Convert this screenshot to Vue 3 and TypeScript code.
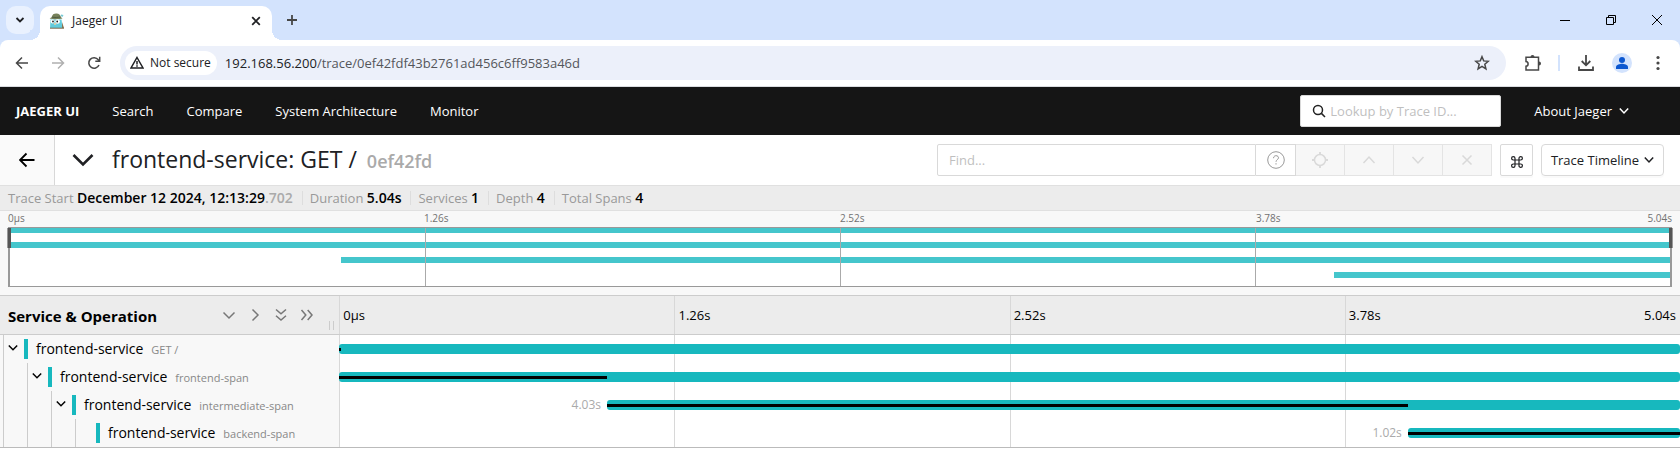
<script setup lang="ts">
import { ref } from 'vue'

interface Span {
  service: string
  operation: string
  depth: number
  start: number
  end: number
  criticalEnd: number
  label: string
}

const spans: Span[] = [
  { service: 'frontend-service', operation: 'GET /', depth: 0, start: 0, end: 100, criticalEnd: 0.1, label: '' },
  { service: 'frontend-service', operation: 'frontend-span', depth: 1, start: 0, end: 100, criticalEnd: 20, label: '' },
  { service: 'frontend-service', operation: 'intermediate-span', depth: 2, start: 19.97, end: 100, criticalEnd: 79.7, label: '4.03s' },
  { service: 'frontend-service', operation: 'backend-span', depth: 3, start: 79.7, end: 100, criticalEnd: 100, label: '1.02s' },
]

const ticks = ['0µs', '1.26s', '2.52s', '3.78s']
const endTick = '5.04s'
const navLinks = ['Search', 'Compare', 'System Architecture', 'Monitor']
const summary = [
  { name: 'Trace Start', value: 'December 12 2024, 12:13:29', faint: '.702' },
  { name: 'Duration', value: '5.04s', faint: '' },
  { name: 'Services', value: '1', faint: '' },
  { name: 'Depth', value: '4', faint: '' },
  { name: 'Total Spans', value: '4', faint: '' },
]

const traceId = ref('')
const find = ref('')
const address = ref('/trace/0ef42fdf43b2761ad456c6ff9583a46d')

const critical = (s: Span) => ((s.criticalEnd - s.start) / (s.end - s.start)) * 100
</script>

<template>
  <div class="window">
    <div class="tabstrip">
      <button class="tab-search" aria-label="Search tabs">
        <svg width="10" height="8" viewBox="0 0 10 8"><path d="M1.500 2L5 5.500 8.500 2" class="s2" /></svg>
      </button>
      <div class="tab">
        <svg class="favicon" width="16" height="16" viewBox="0 0 16 16">
          <path d="M1.500 6.500h11l1 8.500H1z" fill="#62cbdc" />
          <path d="M13 9l2 6h-2z" fill="#8a7350" />
          <path d="M12 1.500l2.500.5-1 2-1.800-1z" fill="#78cbd6" />
          <path d="M3 4C3 1.300 5 .3 7.500.4c2.500 0 4 1.300 4 3.400l2 1.800c-3 .8-9.500 1-12.900-.1z" fill="#76815a" />
          <path d="M2.800 4c3 .7 6 .6 8.700-.2" fill="none" stroke="#4d5940" />
          <circle cx="3.600" cy="8.500" r="2" fill="#fff" />
          <circle cx="8.600" cy="8.500" r="2.300" fill="#fff" />
          <circle cx="4" cy="8.500" r=".9" fill="#222" />
          <circle cx="8.200" cy="8.500" r=".9" fill="#222" />
          <path d="M5 10h2.200v1.800H5z" fill="#dfd0a8" />
          <path d="M1 15.200h14" stroke="#79684a" />
        </svg>
        <span class="tab-title">Jaeger UI</span>
        <button class="tab-close" aria-label="Close tab">
          <svg width="10" height="10" viewBox="0 0 10 10"><path d="M1.200 1.200l7.600 7.600M8.800 1.200L1.200 8.800" class="s2" /></svg>
        </button>
      </div>
      <button class="new-tab" aria-label="New tab">
        <svg width="12" height="12" viewBox="0 0 12 12"><path d="M6 1v10M1 6h10" class="s2" /></svg>
      </button>
      <div class="win-controls">
        <button aria-label="Minimize"><svg width="10" height="10" viewBox="0 0 10 10"><path d="M0 5.500h10" class="s1" /></svg></button>
        <button aria-label="Restore"><svg width="10" height="10" viewBox="0 0 10 10"><path d="M.5 2.500h7v7h-7zM2.500 2.500v-2h7v7h-2" class="s1" /></svg></button>
        <button aria-label="Close"><svg width="10" height="10" viewBox="0 0 10 10"><path d="M0 0l10 10M10 0L0 10" class="s1" /></svg></button>
      </div>
    </div>

    <div class="toolbar">
      <button class="tool" aria-label="Back"><svg width="14" height="14" viewBox="0 0 14 14"><path d="M13 7H2M7 1.500L1.500 7 7 12.500" class="s15" /></svg></button>
      <button class="tool dim" aria-label="Forward"><svg width="14" height="14" viewBox="0 0 14 14"><path d="M1 7h11M7 1.500L12.500 7 7 12.500" class="s15" /></svg></button>
      <button class="tool" aria-label="Reload"><svg width="14" height="14" viewBox="0 0 14 14"><path d="M12 9A5.300 5.300 0 1 1 11.300 3.700L12.500 5M12.700.8V5.200H8.300" class="s15" /></svg></button>
      <div class="omnibox">
        <button class="chip">
          <svg width="14" height="13" viewBox="0 0 14 13"><path d="M7 1.500L13 12H1z" class="s15" /><path d="M7 5v3.500M7 9.300v1.500" class="s15" /></svg>
          Not secure
        </button>
        <label class="address"><span>192.168.56.200</span><input v-model="address" aria-label="Address" /></label>
        <button class="star" aria-label="Bookmark">
          <svg width="16" height="16" viewBox="0 0 16 16"><path d="M8 1.700l1.700 4.200 4.600.4-3.500 3 1.100 4.500L8 11.400l-3.900 2.400 1.100-4.500-3.500-3 4.600-.4z" class="s15" /></svg>
        </button>
      </div>
      <button class="ext" aria-label="Extensions">
        <svg width="18" height="18" viewBox="0 0 18 18"><path d="M2 3.300h12.500V16H2v-3.800c2.800-.3 2.800-4.300 0-4.600z" class="s15" /><path d="M6.500 3a2 2 0 0 1 4 0zM15 7.600a2 2 0 0 1 0 4z" fill="currentColor" /></svg>
      </button>
      <span class="tool-sep"></span>
      <button class="ext" aria-label="Downloads">
        <svg width="16" height="18" viewBox="0 0 16 18"><path d="M8 1v10M3.700 7L8 11.300 12.300 7M1 12.500V16h14v-3.500" class="s2" /></svg>
      </button>
      <button class="profile" aria-label="Profile">
        <svg width="20" height="20" viewBox="0 0 20 20"><circle cx="10" cy="7" r="3" fill="#0b57d0" /><path d="M4 16v-2c0-2.500 4-3.300 6-3.300s6 .8 6 3.300v2z" fill="#0b57d0" /></svg>
      </button>
      <button class="more" aria-label="Menu">
        <svg width="4" height="16" viewBox="0 0 4 16"><circle cx="2" cy="2.500" r="1.600" /><circle cx="2" cy="8" r="1.600" /><circle cx="2" cy="13.500" r="1.600" /></svg>
      </button>
    </div>

    <nav class="nav">
      <a href="#" class="brand">JAEGER UI</a>
      <a v-for="l in navLinks" :key="l" href="#">{{ l }}</a>
      <label class="lookup">
        <svg width="14" height="14" viewBox="0 0 14 14"><circle cx="6" cy="6" r="4.500" class="s15" /><path d="M9.400 9.400L13 13" class="s15" /></svg>
        <input v-model="traceId" aria-label="Trace ID" placeholder="Lookup by Trace ID..." />
      </label>
      <button class="about">About Jaeger
        <svg width="10" height="8" viewBox="0 0 10 8"><path d="M.8 1.500L5 6l4.200-4.500" class="s15" /></svg>
      </button>
    </nav>

    <header class="trace-header">
      <a href="#" class="back" aria-label="Back to search">
        <svg width="16" height="16" viewBox="0 0 16 16"><path d="M15.500 8H1.500M7.500 1.500L1 8l6.500 6.500" class="s2" /></svg>
      </a>
      <button class="toggle" aria-label="Collapse header">
        <svg width="22" height="14" viewBox="0 0 22 14"><path d="M1.500 2L11 11.500 20.500 2" class="s3" /></svg>
      </button>
      <h1>frontend-service: GET / <small>0ef42fd</small></h1>
      <div class="find-group">
        <input v-model="find" class="find" aria-label="Find" placeholder="Find..." />
        <button class="help" aria-label="Search help">
          <svg width="18" height="18" viewBox="0 0 18 18"><circle cx="9" cy="9" r="8.300" class="s1" /><path d="M6.500 7.200c0-3.400 5-3.200 5-.4 0 1.800-2.500 1.900-2.500 4M9 12.200v1.300" class="s1" /></svg>
        </button>
        <button class="find-btn" disabled aria-label="Locate match">
          <svg width="16" height="16" viewBox="0 0 16 16"><circle cx="8" cy="8" r="5.500" class="s15" /><path d="M8 0v3M8 13v3M0 8h3M13 8h3" class="s2" /></svg>
        </button>
        <button class="find-btn" disabled aria-label="Previous match">
          <svg width="14" height="10" viewBox="0 0 14 10"><path d="M1.500 8L7 2l5.500 6" class="s15" /></svg>
        </button>
        <button class="find-btn" disabled aria-label="Next match">
          <svg width="14" height="10" viewBox="0 0 14 10"><path d="M1.500 2L7 8l5.500-6" class="s15" /></svg>
        </button>
        <button class="find-btn" disabled aria-label="Clear search">
          <svg width="12" height="12" viewBox="0 0 12 12"><path d="M1.500 1.500l9 9M10.500 1.500l-9 9" class="s15" /></svg>
        </button>
      </div>
      <button class="box cmd" aria-label="Keyboard shortcuts">
        <svg width="12" height="12" viewBox="0 0 12 12"><path d="M4 4V2.300A1.700 1.700 0 1 0 2.300 4h7.400A1.700 1.700 0 1 0 8 2.300v7.400A1.700 1.700 0 1 0 9.700 8H2.300A1.700 1.700 0 1 0 4 9.700z" class="s12" /></svg>
      </button>
      <button class="box view">Trace Timeline
        <svg width="10" height="8" viewBox="0 0 10 8"><path d="M.8 1.500L5 6l4.200-4.500" class="s15" /></svg>
      </button>
    </header>

    <ul class="summary">
      <li v-for="s in summary" :key="s.name">{{ s.name }} <b>{{ s.value }}<i v-if="s.faint">{{ s.faint }}</i></b></li>
    </ul>

    <section class="overview">
      <div class="mini-ticks tick-row">
        <span v-for="t in ticks" :key="t">{{ t }}</span>
        <span class="last">{{ endTick }}</span>
      </div>
      <div class="mini">
        <div class="mini-graph">
          <div v-for="s in spans" :key="s.operation" class="mini-bar" :style="{ marginLeft: s.start + '%', width: s.end - s.start + '%' }"></div>
          <div class="mini-grid"><span v-for="t in ticks" :key="t"></span></div>
        </div>
        <span class="handle left"></span>
        <span class="handle right"></span>
      </div>
    </section>

    <table class="timeline">
      <thead>
        <tr>
          <th class="name-col" scope="col">
            <div class="name-head">
              <span>Service &amp; Operation</span>
              <button aria-label="Expand one level"><svg width="14" height="14" viewBox="0 0 14 14"><path d="M1.500 4.500L7 10l5.500-5.500" class="s15" /></svg></button>
              <button aria-label="Collapse one level"><svg width="14" height="14" viewBox="0 0 14 14"><path d="M4.500 1.500L10 7l-5.500 5.500" class="s15" /></svg></button>
              <button aria-label="Expand all"><svg width="14" height="14" viewBox="0 0 14 14"><path d="M2 1.500l5 4.300 5-4.300M2 7.700L7 12l5-4.300" class="s15" /></svg></button>
              <button aria-label="Collapse all"><svg width="14" height="14" viewBox="0 0 14 14"><path d="M1.500 2l4.300 5-4.300 5M7.700 2L12 7l-4.300 5" class="s15" /></svg></button>
              <i class="grip"></i>
            </div>
          </th>
          <th class="time-col" scope="col">
            <div class="ticks tick-row">
              <span v-for="t in ticks" :key="t">{{ t }}</span>
              <span class="last">{{ endTick }}</span>
            </div>
          </th>
        </tr>
      </thead>
      <tbody>
        <tr v-for="s in spans" :key="s.operation">
          <td class="name-col">
            <div class="name-cell">
              <span v-for="n in s.depth" :key="n" class="indent"></span>
              <button v-if="s.depth < 3" class="indent" aria-label="Toggle children">
                <svg width="10" height="8" viewBox="0 0 10 8"><path d="M.8 1.500L5 5.700l4.200-4.200" class="s15" /></svg>
              </button>
              <span v-else class="indent"></span>
              <a href="#" class="span-name"><span>{{ s.service }}</span><small>{{ s.operation }}</small></a>
            </div>
          </td>
          <td class="time-col">
            <div class="track">
              <span class="duration" :style="{ width: s.start + '%' }">{{ s.label }}</span>
              <div class="bar" :style="{ width: s.end - s.start + '%' }">
                <div class="critical" :style="{ width: critical(s) + '%' }"></div>
              </div>
            </div>
          </td>
        </tr>
      </tbody>
    </table>
  </div>
</template>

<style>
body { background: #fff; }
</style>

<style scoped>
.window, .window * { box-sizing: border-box; }
.window { font: 13px/20px "Open Sans", "Noto Sans", sans-serif; color: #202124; background: #d3e3fd; }
button, input { font: inherit; color: inherit; border: 0; background: none; padding: 0; margin: 0; outline: 0; border-radius: 0; }
button { display: flex; align-items: center; justify-content: center; flex: none; }
a { color: inherit; text-decoration: none; }
svg { display: block; flex: none; fill: currentColor; }
.s1, .s12, .s15, .s2, .s3 { fill: none; stroke: currentColor; stroke-width: 1; }
.s12 { stroke-width: 1.2; }
.s15 { stroke-width: 1.5; }
.s2 { stroke-width: 1.8; }
.s3 { stroke-width: 2.6; }

.tabstrip { display: flex; height: 40px; padding: 6px 0 0 6px; }
.tab-search { width: 28px; height: 28px; border-radius: 10px; background: #e9f1fe; }
.tab { position: relative; display: flex; align-items: center; width: 232px; margin-left: 6px; padding: 0 11px 4px 9px; background: #fff; border-radius: 10px 10px 0 0; height: 34px; }
.tab::before, .tab::after { content: ""; position: absolute; bottom: 0; width: 10px; height: 10px; }
.tab::before { right: 100%; background: radial-gradient(circle at 0 0, #d3e3fd 10px, #fff 10px); }
.tab::after { left: 100%; background: radial-gradient(circle at 100% 0, #d3e3fd 10px, #fff 10px); }
.tab-title { flex: 1; margin-left: 7px; font-size: 12px; }
.new-tab { width: 28px; height: 28px; margin-left: 6px; color: #474747; }
.win-controls { display: flex; margin: -6px 0 0 auto; color: #000; }
.win-controls button { width: 46px; height: 40px; }

.toolbar { display: flex; align-items: center; height: 47px; padding: 0 8px 1px 8px; background: #fff; border-bottom: 1px solid #dadce0; color: #474747; border-radius: 8px 8px 0 0; }
.tool { width: 28px; height: 28px; margin-right: 8px; }
.dim { color: #b0b0b0; }
.omnibox { display: flex; align-items: center; flex: 1; height: 34px; margin-left: 4px; padding: 0 16px 0 5px; border-radius: 17px; background: #ecf0fa; }
.chip { gap: 6px; height: 24px; padding: 0 6px 0 5px; border-radius: 12px; background: #fff; font-size: 12px; font-weight: 500; color: #202124; }
.address { display: flex; flex: 1; margin-left: 8px; color: #202124; }
.address input { flex: 1; min-width: 0; color: #54565a; }
.ext { width: 28px; height: 28px; margin-left: 13px; }
.tool-sep { width: 2px; height: 16px; margin-left: 11px; background: #d3e3fd; }
.tool-sep + .ext { margin-left: 12px; }
.profile { width: 20px; height: 20px; margin-left: 12px; border-radius: 50%; background: #d3e3fd; }
.more { width: 28px; height: 28px; margin-left: 12px; }

.nav { display: flex; align-items: center; gap: 33px; height: 48px; padding: 0 51px 0 16px; background: #151515; color: #fff; }
.brand { font-weight: 700; }
.lookup { display: flex; align-items: center; gap: 4px; width: 201px; height: 32px; margin-left: auto; padding: 0 11px; border: 1px solid #d9d9d9; border-radius: 2px; background: #fff; color: #222; }
.lookup input { flex: 1; min-width: 0; }
input::placeholder { color: #bfbfbf; opacity: 1; }
.about { gap: 7px; }

.trace-header { display: flex; align-items: center; height: 51px; padding-right: 16px; border-bottom: 1px solid #e0e0e0; background: #fff; }
.back { display: flex; align-items: center; justify-content: center; align-self: stretch; width: 55px; border-right: 1px solid #d8d8d8; background: #fafafa; color: #000; }
.toggle { width: 22px; margin: 0 18px 0 17px; }
h1 { flex: 1; margin: 0; font-size: 23px; line-height: 32px; font-weight: 500; white-space: nowrap; }
h1 small { margin-left: 4px; font-size: 18px; font-weight: 600; color: #aaa; }
.find-group { display: flex; height: 32px; }
.find { width: 319px; padding: 0 11px; border: 1px solid #d9d9d9; border-radius: 2px 0 0 2px; }
.help { width: 40px; border: 1px solid #d9d9d9; border-left: 0; color: #999; }
.find-btn { width: 49px; border: 1px solid #e4e4e4; border-left: 0; background: #f7f7f7; color: #d9d9d9; }
.box { height: 32px; margin-left: 8px; border: 1px solid #d9d9d9; border-radius: 2px; box-shadow: 0 2px 0 #fafafa; }
.cmd { width: 33px; padding-top: 4px; }
.view { gap: 5px; width: 123px; border-radius: 4px; }

.summary { display: flex; margin: 0; padding: 2px 8px; list-style: none; background: #ececec; border-bottom: 1px solid #e0e0e0; color: #999; }
.summary li { height: 20px; }
.summary li + li { margin-left: 9px; padding-left: 8px; background: linear-gradient(#ddd, #ddd) 0 50% / 1px 14px no-repeat; }
.summary b { font-size: 14px; font-weight: 600; color: #000; }
.summary i { color: #aaa; font-style: normal; }

.overview { padding: 0 8px 8px; background: #f8f8f8; border-bottom: 1px solid #ccc; }
.tick-row { display: grid; grid-template-columns: repeat(4, 1fr); }
.tick-row span { grid-row: 1; }
.tick-row span:nth-child(1) { grid-column: 1; }
.tick-row span:nth-child(2) { grid-column: 2; }
.tick-row span:nth-child(3) { grid-column: 3; }
.tick-row span:nth-child(n + 4) { grid-column: 4; }
.tick-row .last { text-align: right; }
.mini-ticks { font-size: 10px; line-height: 14px; height: 16px; color: #717171; }
.mini { position: relative; }
.mini-graph { position: relative; display: flex; flex-direction: column; gap: 9px; height: 60px; overflow: hidden; border: 1px solid #999; background: #fff; }
.mini-bar { height: 6px; flex: none; background: #45c6cc; }
.mini-bar:first-child { margin-top: -1px; }
.mini-grid { position: absolute; inset: 0; display: grid; grid-template-columns: repeat(4, 1fr); border: 0 solid #999; border-width: 0 1px; }
.mini-grid span + span { border-left: 1px solid #aaa; }
.handle { position: absolute; top: 1px; width: 4px; height: 20px; background: #555; border: 0 solid #999; }
.left { left: -1px; border-left-width: 1px; }
.right { right: -1px; border-right-width: 1px; }

.timeline { width: 100%; border-collapse: collapse; table-layout: fixed; border-bottom: 1px solid #bbb; background: #fff; color: #000; }
th, td { padding: 0; text-align: left; font-weight: 400; vertical-align: middle; }
th { height: 38px; background: #ececec; border-bottom: 1px solid #ccc; }
.name-col { width: 20.2%; }
td.name-col { background: #f8f8f8; }
.name-head { display: flex; align-items: center; height: 37px; padding-left: 8px; color: #777; }
.name-head span { flex: 1; padding-top: 2px; font-size: 15px; font-weight: 700; color: #000; }
.name-head button { width: 14px; margin-right: 12px; }
.grip { align-self: flex-end; width: 5px; height: 9px; margin: 0 5px 3px 3px; border: 1px solid #ccc; border-width: 0 1px; }
.time-col { background-image: linear-gradient(#d8d8d8, #d8d8d8), linear-gradient(#d8d8d8, #d8d8d8), linear-gradient(#d8d8d8, #d8d8d8), linear-gradient(#d8d8d8, #d8d8d8); background-position: 0 0, 25% 0, calc(50% + 1px) 0, calc(75% + 1px) 0; background-size: 1px 100%; background-repeat: no-repeat; }
th.time-col { background-color: #ececec; }
.ticks span { padding: 0 4px; }
.name-cell { display: flex; height: 28px; align-items: stretch; }
.indent { display: flex; align-items: flex-start; justify-content: center; width: 24px; padding: 9px 6px 0 0; border-left: 1px solid #ccc; margin-left: 3px; margin-right: -3px; }
.span-name { display: flex; align-items: baseline; gap: 8px; margin: 4px 0; padding-left: 8px; border-left: 4px solid #17b8be; font-size: 14px; white-space: nowrap; }
.span-name small { font-size: 11px; color: #888; }
.track { display: flex; align-items: center; height: 28px; }
.duration { flex: none; overflow: hidden; text-align: right; font-size: 12px; color: #aaa; }
.duration:not(:empty) { padding-right: 6px; }
.bar { position: relative; height: 10px; border-radius: 3px; background: #17b8be; }
.critical { position: absolute; left: 0; top: 4px; height: 3px; background: #000; }
</style>
